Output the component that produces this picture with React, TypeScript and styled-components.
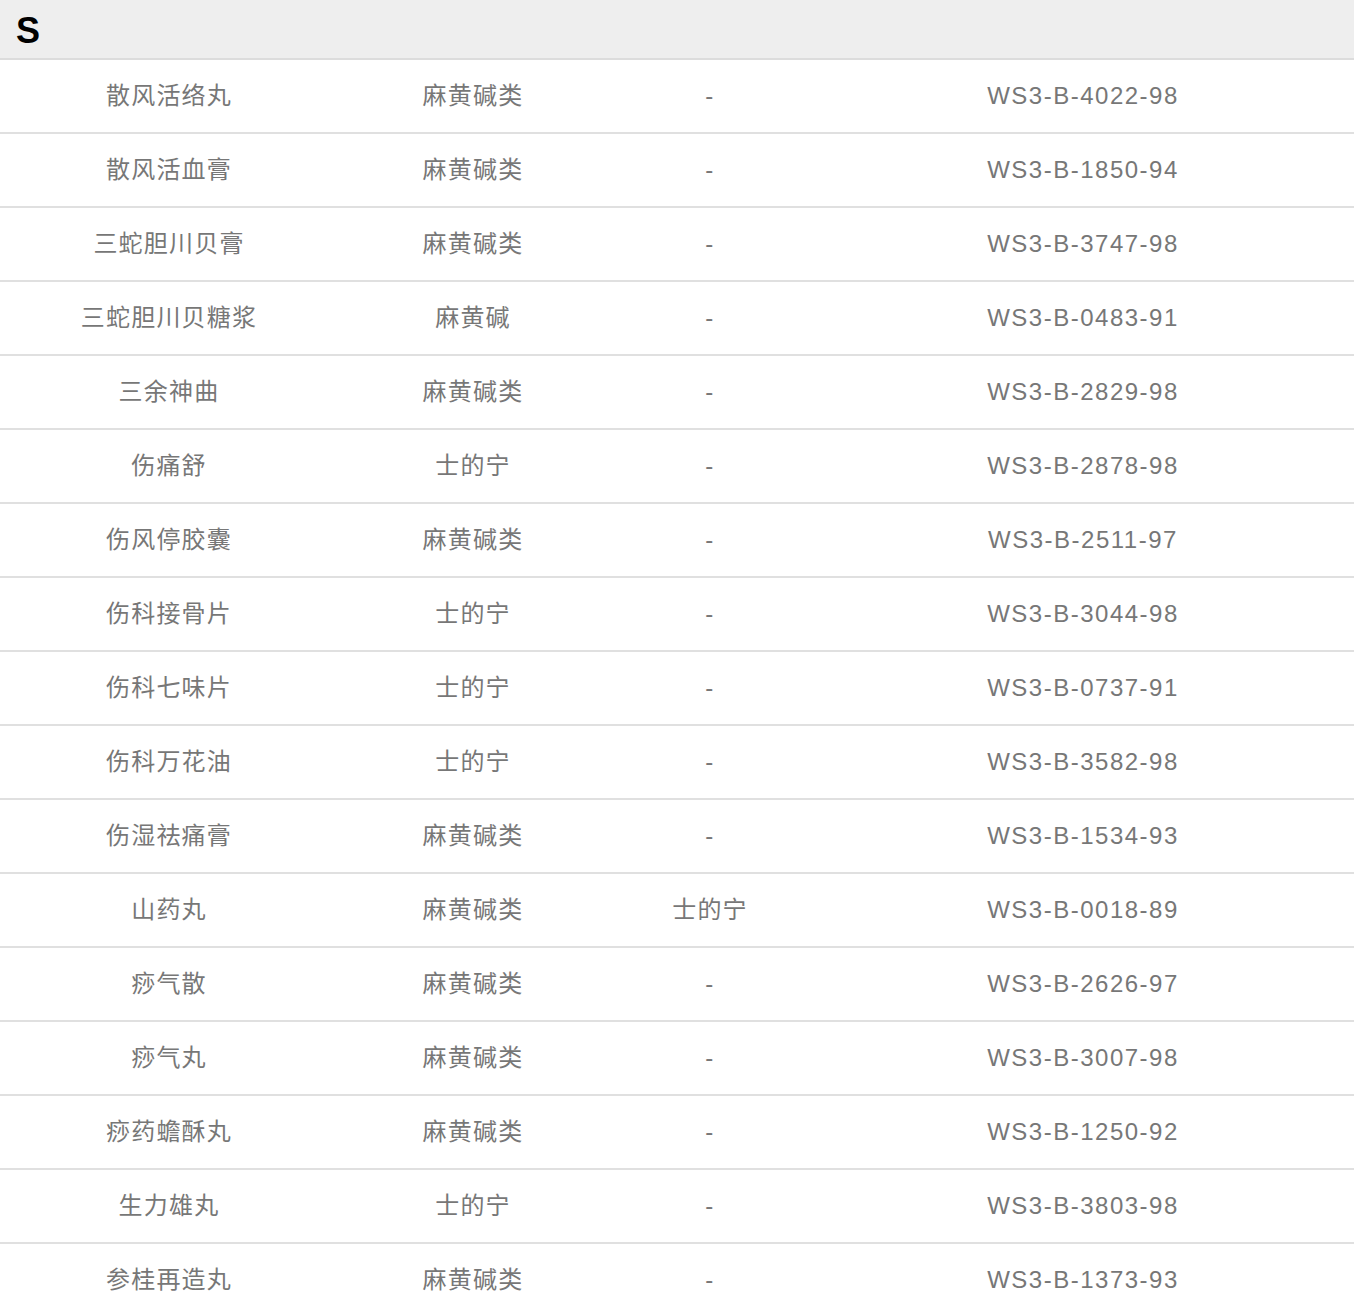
import React from "react";
import styled, { createGlobalStyle } from "styled-components";

const Global = createGlobalStyle`
  html, body { margin: 0; padding: 0; background: #fff; }
  body { font-family: "Liberation Sans", "Noto Sans CJK SC", sans-serif; }
`;

const Page = styled.div`
  width: 1354px;
`;

const SectionHeader = styled.div`
  height: 60px;
  box-sizing: border-box;
  background: #eeeeee;
  border-bottom: 2px solid #dcdcdc;
  display: flex;
  align-items: center;
  padding: 3px 0 0 16px;
  font-size: 36px;
  font-weight: 700;
  color: #000;
`;

const Row = styled.div`
  display: grid;
  grid-template-columns: 338px 270px 204px 1fr;
  height: 72px;
  border-bottom: 2px solid #e0e0e0;
  align-items: center;
`;

const Cell = styled.div<{ $cjk?: boolean }>`
  text-align: center;
  font-size: 24px;
  letter-spacing: ${(p) => (p.$cjk ? "1.2px" : "1.5px")};
  margin-top: ${(p) => (p.$cjk ? "-5px" : "0")};
  color: #777777;
  white-space: nowrap;
`;

const rows: [string, string, string, string][] = [
  ["散风活络丸", "麻黄碱类", "-", "WS3-B-4022-98"],
  ["散风活血膏", "麻黄碱类", "-", "WS3-B-1850-94"],
  ["三蛇胆川贝膏", "麻黄碱类", "-", "WS3-B-3747-98"],
  ["三蛇胆川贝糖浆", "麻黄碱", "-", "WS3-B-0483-91"],
  ["三余神曲", "麻黄碱类", "-", "WS3-B-2829-98"],
  ["伤痛舒", "士的宁", "-", "WS3-B-2878-98"],
  ["伤风停胶囊", "麻黄碱类", "-", "WS3-B-2511-97"],
  ["伤科接骨片", "士的宁", "-", "WS3-B-3044-98"],
  ["伤科七味片", "士的宁", "-", "WS3-B-0737-91"],
  ["伤科万花油", "士的宁", "-", "WS3-B-3582-98"],
  ["伤湿祛痛膏", "麻黄碱类", "-", "WS3-B-1534-93"],
  ["山药丸", "麻黄碱类", "士的宁", "WS3-B-0018-89"],
  ["痧气散", "麻黄碱类", "-", "WS3-B-2626-97"],
  ["痧气丸", "麻黄碱类", "-", "WS3-B-3007-98"],
  ["痧药蟾酥丸", "麻黄碱类", "-", "WS3-B-1250-92"],
  ["生力雄丸", "士的宁", "-", "WS3-B-3803-98"],
  ["参桂再造丸", "麻黄碱类", "-", "WS3-B-1373-93"],
];

const isCjk = (s: string) => /[\u4e00-\u9fff]/.test(s);

export default function App() {
  return (
    <Page>
      <Global />
      <SectionHeader>S</SectionHeader>
      {rows.map((r, i) => (
        <Row key={i}>
          {r.map((c, j) => (
            <Cell key={j} $cjk={isCjk(c)}>
              {c}
            </Cell>
          ))}
        </Row>
      ))}
    </Page>
  );
}
